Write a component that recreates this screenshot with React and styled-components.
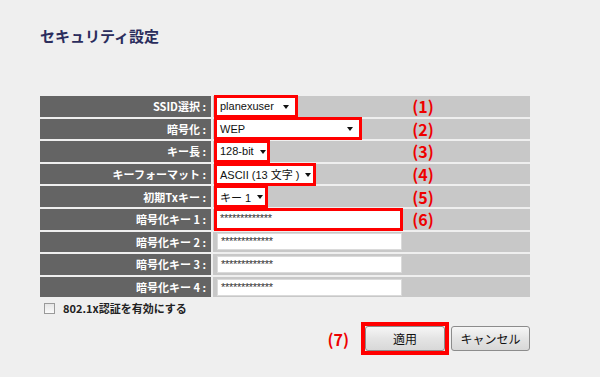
import React from "react";
import styled, { createGlobalStyle, css } from "styled-components";

const Global = createGlobalStyle`
  html, body { margin: 0; padding: 0; background: #efefef; }
  body { font-family: "Liberation Sans", "Noto Sans CJK JP", sans-serif; }
`;

const Page = styled.div`
  width: 600px;
  height: 377px;
  box-sizing: border-box;
  padding: 27px 70px 0 40px;
  background: #efefef;
`;

const Title = styled.h1`
  margin: 0 0 51px 0;
  font-family: "Noto Sans CJK JP", sans-serif;
  font-size: 15px;
  line-height: 18px;
  font-weight: 700;
  color: #2b2d5d;
`;

const Table = styled.div`
  display: grid;
  grid-template-columns: 171px 1fr;
  grid-auto-rows: 20.6px;
  column-gap: 2px;
  row-gap: 2px;
  width: 490px;
`;

const Label = styled.div`
  background: #646464;
  color: #ffffff;
  font-family: "Noto Sans CJK JP", sans-serif;
  font-weight: 700;
  font-size: 11px;
  display: flex;
  align-items: center;
  justify-content: flex-end;
  padding-right: 5px;
  white-space: nowrap;
`;

const Value = styled.div`
  background: #c8c8c8;
  display: grid;
  grid-template-columns: 195px 30px 1fr;
  align-items: center;
`;

const Field = styled.div`
  box-sizing: border-box;
  margin-left: 4px;
  width: ${(p) => p.$w}px;
  height: 17px;
  background: #fff;
  display: flex;
  align-items: center;
  justify-content: space-between;
  padding: 0 6px 0 3px;
  font-size: 11px;
  color: #111;
  white-space: nowrap;
  overflow: hidden;
  ${(p) =>
    p.$hl
      ? css`outline: 3px solid #ff0000;`
      : css`border: 1px solid #dadada;`}
`;

const Arrow = styled.span`
  flex: none;
  width: 0;
  height: 0;
  border-left: 3.5px solid transparent;
  border-right: 3.5px solid transparent;
  border-top: 4px solid #111;
  margin-top: 1px;
  margin-left: 6px;
`;

const Masked = styled.span`
  font-size: 11px;
  letter-spacing: -0.3px;
  color: #333;
  align-self: flex-start;
  margin-top: 1px;
`;

const Note = styled.span`
  font-family: "Noto Sans CJK JP", sans-serif;
  font-weight: 700;
  font-size: 16px;
  color: #ee0000;
  text-align: center;
  line-height: 1;
`;

const CheckRow = styled.label`
  display: flex;
  align-items: center;
  gap: 8px;
  margin: 5px 0 0 4px;
  height: 12px;
  font-family: "Noto Sans CJK JP", sans-serif;
  font-weight: 700;
  font-size: 11px;
  color: #222;
`;

const Box = styled.span`
  box-sizing: border-box;
  width: 11px;
  height: 11px;
  border: 1px solid #9a9a9a;
  background: linear-gradient(#e6e6e6, #fafafa);
`;

const Actions = styled.div`
  display: flex;
  justify-content: flex-end;
  align-items: center;
  width: 490px;
  margin-top: 8px;
`;

const Note7 = styled(Note)`
  margin-right: 12px;
`;

const Highlight = styled.div`
  border: 4px solid #ff0000;
  display: flex;
`;

const Button = styled.button`
  box-sizing: border-box;
  width: ${(p) => p.$w}px;
  height: 25px;
  border: 1px solid #8c8c8c;
  border-radius: 3px;
  background: linear-gradient(#f6f6f6, #e4e4e4 50%, #d8d8d8);
  font-family: "Noto Sans CJK JP", sans-serif;
  font-size: 12px;
  color: #111;
  padding: 0;
  margin-left: ${(p) => p.$ml || 0}px;
`;

const rows = [
  { label: "SSID選択 :", type: "select", text: "planexuser", w: 78, hl: true, note: "(1)" },
  { label: "暗号化 :", type: "select", text: "WEP", w: 142, hl: true, note: "(2)" },
  { label: "キー長 :", type: "select", text: "128-bit", w: 50, hl: true, note: "(3)" },
  { label: "キーフォーマット :", type: "select", text: "ASCII (13 文字 )", w: 96, hl: true, note: "(4)" },
  { label: "初期Txキー :", type: "select", text: "キー 1", w: 48, hl: true, note: "(5)" },
  { label: "暗号化キー 1 :", type: "input", w: 183, hl: true, note: "(6)" },
  { label: "暗号化キー 2 :", type: "input", w: 185 },
  { label: "暗号化キー 3 :", type: "input", w: 185 },
  { label: "暗号化キー 4 :", type: "input", w: 185 },
];

export default function App() {
  return (
    <>
      <Global />
      <Page>
        <Title>セキュリティ設定</Title>
        <Table>
          {rows.map((r) => (
            <React.Fragment key={r.label}>
              <Label>{r.label}</Label>
              <Value>
                <Field $w={r.w} $hl={r.hl}>
                  {r.type === "select" ? (
                    <>
                      <span>{r.text}</span>
                      <Arrow />
                    </>
                  ) : (
                    <Masked>*************</Masked>
                  )}
                </Field>
                {r.note ? <Note>{r.note}</Note> : <span />}
                <span />
              </Value>
            </React.Fragment>
          ))}
        </Table>
        <CheckRow>
          <Box />
          802.1x認証を有効にする
        </CheckRow>
        <Actions>
          <Note7>(7)</Note7>
          <Highlight>
            <Button $w={80}>適用</Button>
          </Highlight>
          <Button $w={79} $ml={2}>キャンセル</Button>
        </Actions>
      </Page>
    </>
  );
}
